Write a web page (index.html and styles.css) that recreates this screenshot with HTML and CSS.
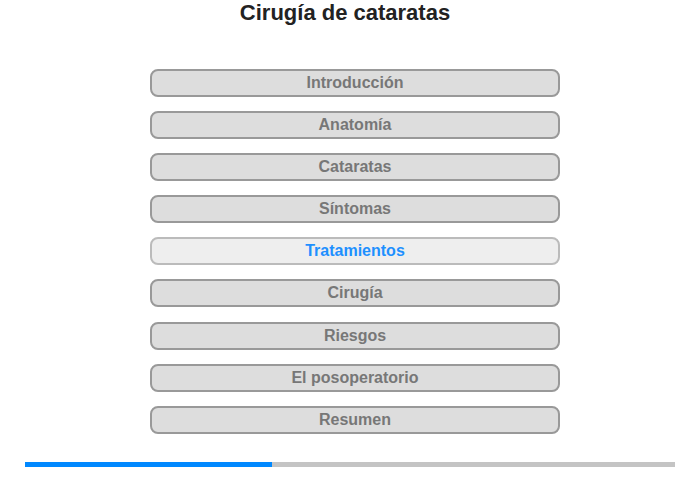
FILE: index.html
```html
<!DOCTYPE html>
<html lang="es">
<head>
    <meta charset="UTF-8">
    <title>Cirugía de cataratas</title>
    <link rel="stylesheet" href="styles.css">
</head>
<body>
    <h1 class="title">Cirugía de cataratas</h1>
    <div class="menu">
        <div class="item">Introducción</div>
        <div class="item">Anatomía</div>
        <div class="item">Cataratas</div>
        <div class="item">Síntomas</div>
        <div class="item active">Tratamientos</div>
        <div class="item">Cirugía</div>
        <div class="item">Riesgos</div>
        <div class="item">El posoperatorio</div>
        <div class="item">Resumen</div>
    </div>
    <div class="progress">
        <div class="progress-fill" style="width: 38%"></div>
    </div>
</body>
</html>
```

FILE: styles.css
```css
* {
  box-sizing: border-box;
  font-family: "Liberation Sans", Arial, sans-serif;
}

body {
  margin: 0;
  background: #fff;
}

.title {
  margin: 0;
  padding-right: 10px;
  text-align: center;
  font-size: 22px;
  line-height: 25px;
  font-weight: bold;
  color: #222;
}

.menu {
  display: flex;
  flex-direction: column;
  align-items: center;
  gap: 14.1px;
  margin-top: 44px;
  padding-left: 10px;
}

.item {
  width: 410px;
  height: 28px;
  line-height: 24px;
  border: 2px solid #999;
  border-radius: 8px;
  background: #dddddd;
  color: #777;
  text-align: center;
  font-size: 16px;
  font-weight: bold;
}

.item.active {
  background: #eeeeee;
  border-color: #bbb;
  color: #1e90ff;
}

.progress {
  margin: 28px 25px 0;
  height: 5px;
  background: #c4c4c4;
}

.progress-fill {
  height: 100%;
  background: #0088ff;
}
```
